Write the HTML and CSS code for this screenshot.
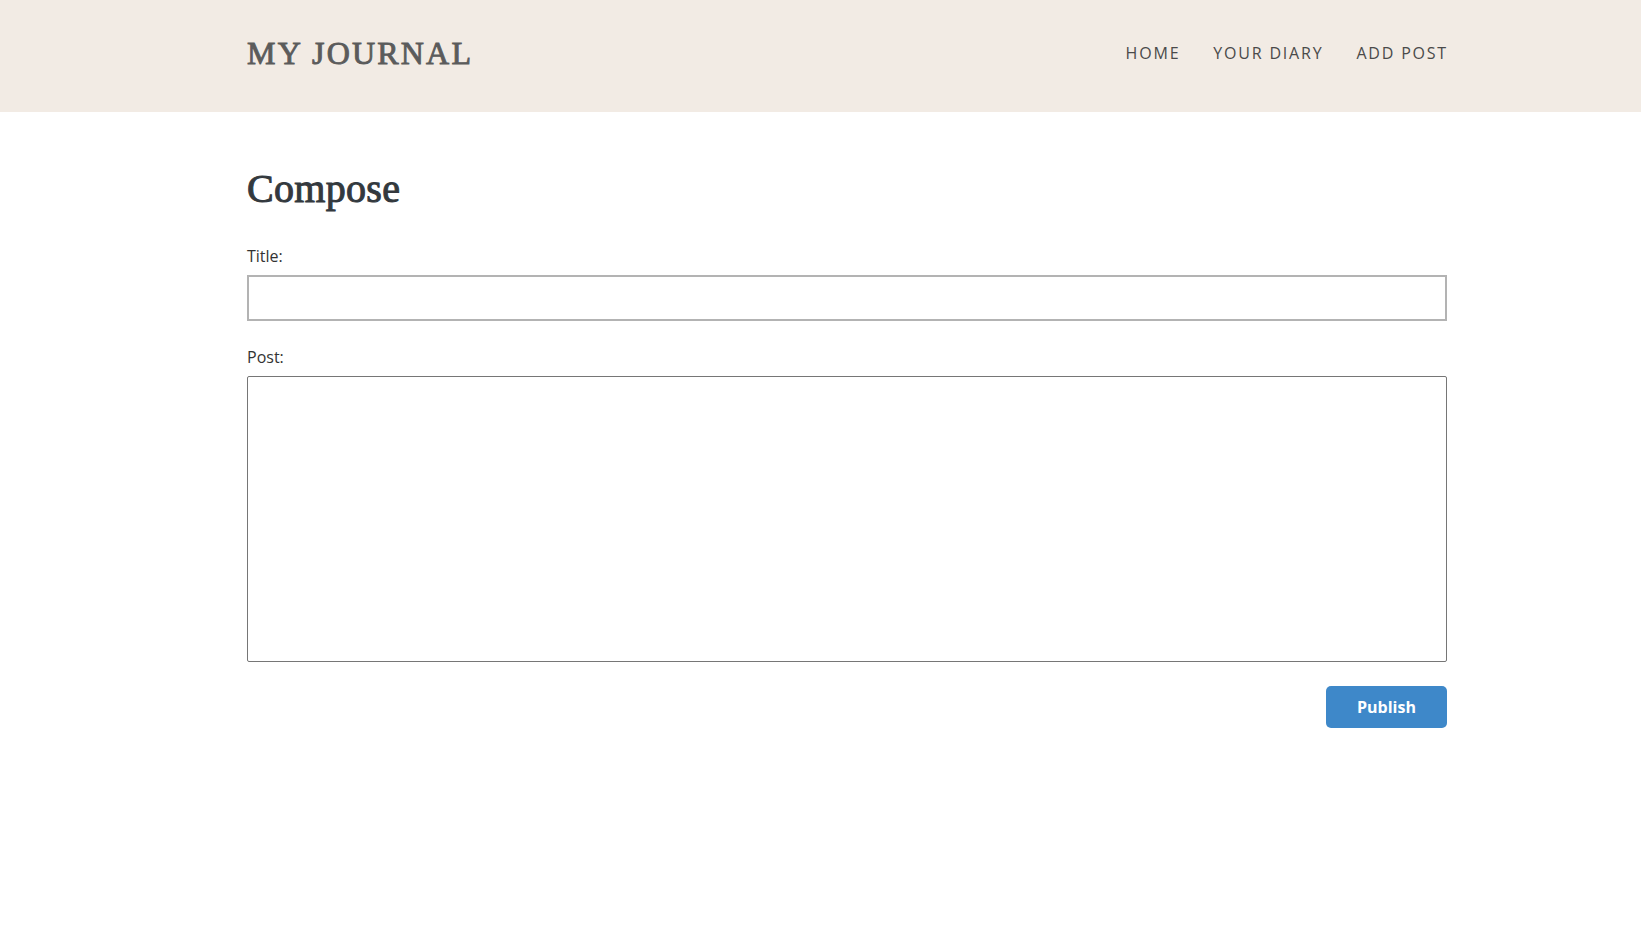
FILE: index.html
```html
<!DOCTYPE html>
<html lang="en">
<head>
<meta charset="utf-8">
<title>My Journal</title>
<link rel="stylesheet" href="styles.css">
</head>
<body>
<header class="site-header">
  <div class="header-inner">
    <a class="logo" href="#">MY JOURNAL</a>
    <nav class="nav">
      <a class="nav-link" href="#">HOME</a>
      <a class="nav-link" href="#">YOUR DIARY</a>
      <a class="nav-link" href="#">ADD POST</a>
    </nav>
  </div>
</header>
<main class="content">
  <h1 class="page-title">Compose</h1>
  <form class="compose-form">
    <label class="field-label" for="title">Title:</label>
    <input class="title-input" id="title" type="text">
    <label class="field-label post-label" for="post">Post:</label>
    <textarea class="post-input" id="post"></textarea>
    <div class="actions">
      <button class="publish-btn" type="button">Publish</button>
    </div>
  </form>
</main>
</body>
</html>
```

FILE: styles.css
```css
* { box-sizing: border-box; }
html, body { margin: 0; padding: 0; }
body {
  font-family: "Open Sans", "Liberation Sans", sans-serif;
  color: #333;
  background: #fff;
}
.site-header {
  background: #f2ebe4;
  height: 112px;
}
.header-inner {
  margin-left: 247px;
  width: 1200px;
  height: 100%;
  display: flex;
  align-items: center;
  justify-content: space-between;
  padding-bottom: 6px;
}
.logo {
  font-family: "Liberation Serif", "DejaVu Serif", serif;
  font-size: 32px;
  letter-spacing: 2.2px;
  color: #5b5b5b;
  text-decoration: none;
  font-weight: 400;
  line-height: 1;
  -webkit-text-stroke: 0.9px #5b5b5b;
}
.nav {
  display: flex;
  gap: 33px;
}
.nav-link {
  font-size: 16px;
  letter-spacing: 1.8px;
  color: #4a4a4a;
  text-decoration: none;
}
.nav-link:last-child {
  margin-right: -1px;
}
.content {
  margin-left: 247px;
  width: 1200px;
  padding-top: 53px;
}
.page-title {
  font-family: "Liberation Serif", "DejaVu Serif", serif;
  font-size: 40px;
  font-weight: 400;
  line-height: 48px;
  margin: 0 0 31px;
  color: #33393e;
  -webkit-text-stroke: 1px #33393e;
  letter-spacing: 0.3px;
}
.compose-form {
  display: flex;
  flex-direction: column;
}
.field-label {
  font-size: 16px;
  line-height: 24px;
  color: #333;
  margin-bottom: 7px;
}
.post-label {
  margin-top: 24px;
  margin-bottom: 7px;
}
.title-input {
  height: 46px;
  width: 100%;
  border: 2px solid #b3b3b3;
  padding: 6px 10px;
  font-size: 16px;
  font-family: inherit;
  outline: none;
}
.post-input {
  height: 286px;
  width: 100%;
  border: 1px solid #767676;
  border-radius: 2px;
  padding: 8px 10px;
  font-size: 16px;
  font-family: inherit;
  resize: none;
  outline: none;
}
.actions {
  display: flex;
  justify-content: flex-end;
  margin-top: 24px;
}
.publish-btn {
  width: 121px;
  height: 42px;
  background: #3e88c9;
  color: #fff;
  border: none;
  border-radius: 5px;
  font-family: "Open Sans", "Liberation Sans", sans-serif;
  font-weight: 700;
  font-size: 16px;
  padding: 0;
}
```
